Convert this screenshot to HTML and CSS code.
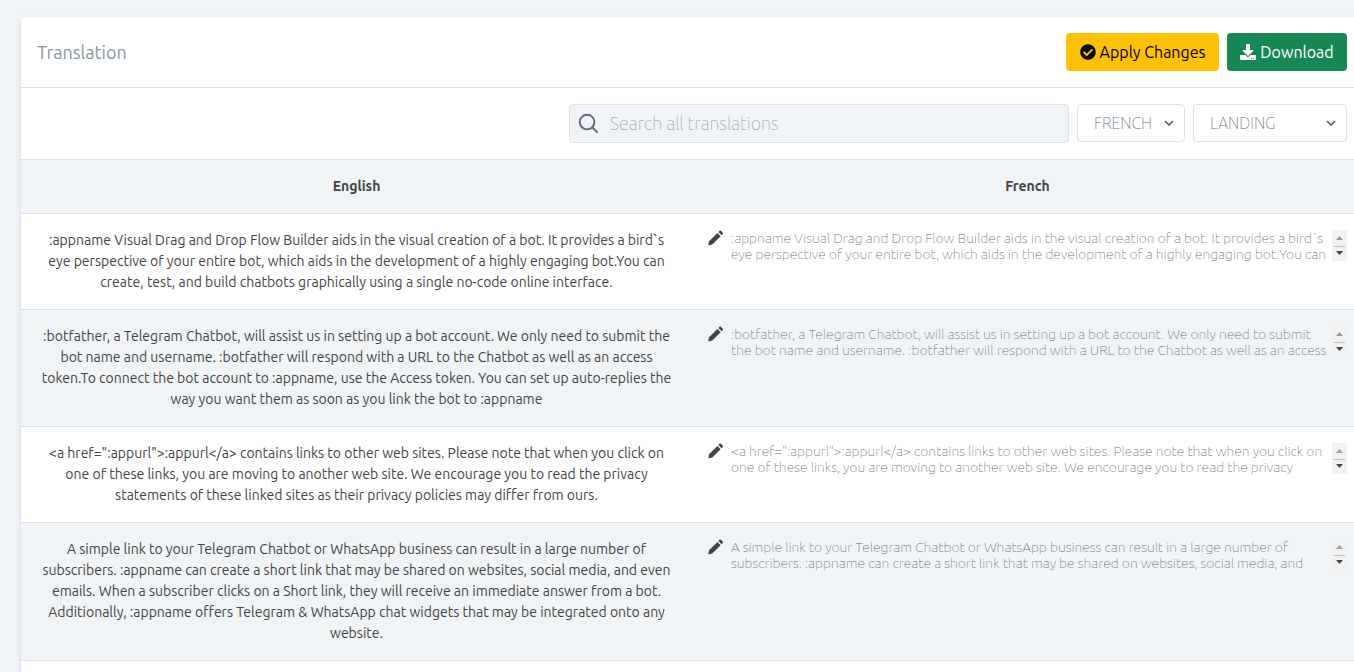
FILE: index.html
```html
<!DOCTYPE html>
<html lang="en">
<head>
<meta charset="utf-8">
<title>Translation</title>
<link rel="stylesheet" href="styles.css">
</head>
<body>
<svg class="sprite" aria-hidden="true">
  <symbol id="pencil" viewBox="0 0 16 16"><path d="M.2 15.4 1 11.3 9.4 2.9 12.7 6.2 4.3 14.6ZM10.4 1.9 11.5.8Q12.2.2 12.9.8L14.8 2.7Q15.4 3.4 14.8 4.1L13.7 5.2Z"/></symbol>
  <symbol id="up" viewBox="0 0 15 15"><path d="M4 10 7.5 6 11 10Z"/></symbol>
  <symbol id="down" viewBox="0 0 15 15"><path d="M4 5H11L7.5 9Z"/></symbol>
</svg>
<main class="card">
  <header class="card-header">
    <h1 class="title">Translation</h1>
    <div class="actions">
      <button class="btn btn-warning" type="button"><svg class="btn-icon" viewBox="0 0 512 512" aria-hidden="true"><path d="M504 256c0 137-111 248-248 248S8 393 8 256 119 8 256 8s248 111 248 248zM227 387l184-184c6-6 6-16 0-22l-22-23c-7-6-17-6-23 0L216 308l-70-70c-6-6-16-6-23 0l-22 23c-6 6-6 16 0 22l104 104c6 6 16 6 22 0z"/></svg>Apply Changes</button>
      <button class="btn btn-success" type="button"><svg class="btn-icon" viewBox="0 0 512 512" aria-hidden="true"><path d="M216 0h80c13 0 24 11 24 24v168h88c18 0 27 21 14 34L270 378c-7 7-20 7-28 0L90 226c-12-13-3-34 15-34h87V24c0-13 11-24 24-24zm296 376v112c0 13-11 24-24 24H24c-13 0-24-11-24-24V376c0-13 11-24 24-24h147l49 49c20 20 52 20 72 0l49-49h147c13 0 24 11 24 24zM388 464a20 20 0 1 0-40 0 20 20 0 0 0 40 0zm64 0a20 20 0 1 0-40 0 20 20 0 0 0 40 0z"/></svg>Download</button>
    </div>
  </header>
  <form class="filters">
    <label class="search">
      <svg class="search-icon" viewBox="0 0 22 22" aria-hidden="true"><circle cx="9.5" cy="9.5" r="7.7"/><path d="M15 15 20.5 20.5"/></svg>
      <input class="search-input" type="search" placeholder="Search all translations" aria-label="Search all translations">
    </label>
    <select class="select select-language" aria-label="Language"><option>FRENCH</option></select>
    <select class="select select-group" aria-label="Group"><option>LANDING</option></select>
  </form>
  <table class="table">
    <thead><tr><th>English</th><th>French</th></tr></thead>
    <tbody>
      <tr>
        <td class="source">:appname Visual Drag and Drop Flow Builder aids in the visual creation of a bot. It provides a bird`s<br>eye perspective of your entire bot, which aids in the development of a highly engaging bot.You can<br>create, test, and build chatbots graphically using a single no-code online interface.</td>
        <td><div class="edit"><svg class="pencil" aria-hidden="true"><use href="#pencil"/></svg><textarea class="value" rows="2" wrap="off" aria-label="French translation 1">:appname Visual Drag and Drop Flow Builder aids in the visual creation of a bot. It provides a bird`s
eye perspective of your entire bot, which aids in the development of a highly engaging bot.You can</textarea><div class="scroller"><button type="button" class="step step-up" aria-label="Scroll up"><svg><use href="#up"/></svg></button><button type="button" class="step step-down" aria-label="Scroll down"><svg><use href="#down"/></svg></button></div></div></td>
      </tr>
      <tr>
        <td class="source">:botfather, a Telegram Chatbot, will assist us in setting up a bot account. We only need to submit the<br>bot name and username. :botfather will respond with a URL to the Chatbot as well as an access<br>token.To connect the bot account to :appname, use the Access token. You can set up auto-replies the<br>way you want them as soon as you link the bot to :appname</td>
        <td><div class="edit"><svg class="pencil" aria-hidden="true"><use href="#pencil"/></svg><textarea class="value" rows="2" wrap="off" aria-label="French translation 2">:botfather, a Telegram Chatbot, will assist us in setting up a bot account. We only need to submit
the bot name and username. :botfather will respond with a URL to the Chatbot as well as an access</textarea><div class="scroller"><button type="button" class="step step-up" aria-label="Scroll up"><svg><use href="#up"/></svg></button><button type="button" class="step step-down" aria-label="Scroll down"><svg><use href="#down"/></svg></button></div></div></td>
      </tr>
      <tr>
        <td class="source">&lt;a href=":appurl"&gt;:appurl&lt;/a&gt; contains links to other web sites. Please note that when you click on<br>one of these links, you are moving to another web site. We encourage you to read the privacy<br>statements of these linked sites as their privacy policies may differ from ours.</td>
        <td><div class="edit"><svg class="pencil" aria-hidden="true"><use href="#pencil"/></svg><textarea class="value" rows="2" wrap="off" aria-label="French translation 3">&lt;a href=":appurl"&gt;:appurl&lt;/a&gt; contains links to other web sites. Please note that when you click on
one of these links, you are moving to another web site. We encourage you to read the privacy</textarea><div class="scroller"><button type="button" class="step step-up" aria-label="Scroll up"><svg><use href="#up"/></svg></button><button type="button" class="step step-down" aria-label="Scroll down"><svg><use href="#down"/></svg></button></div></div></td>
      </tr>
      <tr>
        <td class="source">A simple link to your Telegram Chatbot or WhatsApp business can result in a large number of<br>subscribers. :appname can create a short link that may be shared on websites, social media, and even<br>emails. When a subscriber clicks on a Short link, they will receive an immediate answer from a bot.<br>Additionally, :appname offers Telegram &amp; WhatsApp chat widgets that may be integrated onto any<br>website.</td>
        <td><div class="edit"><svg class="pencil" aria-hidden="true"><use href="#pencil"/></svg><textarea class="value" rows="2" wrap="off" aria-label="French translation 4">A simple link to your Telegram Chatbot or WhatsApp business can result in a large number of
subscribers. :appname can create a short link that may be shared on websites, social media, and</textarea><div class="scroller"><button type="button" class="step step-up" aria-label="Scroll up"><svg><use href="#up"/></svg></button><button type="button" class="step step-down" aria-label="Scroll down"><svg><use href="#down"/></svg></button></div></div></td>
      </tr>
    </tbody>
  </table>
</main>
</body>
</html>
```

FILE: styles.css
```css
* { box-sizing: border-box; }
body {
  margin: 0;
  height: 100vh;
  padding: 17px 0 0 21px;
  overflow: hidden;
  background: #f0f4f7;
  color: #444;
  font-family: Ubuntu, "Noto Sans", sans-serif;
  font-size: 14px;
  font-weight: 400;
}
button, input, select, textarea { font: inherit; }
.sprite { position: absolute; width: 0; height: 0; }
.card {
  min-height: 100vh;
  margin-right: -9px;
  background: #fff;
  border-radius: 4px;
  box-shadow: 0 2px 5px rgba(50, 70, 90, .16);
}
.card-header {
  display: flex;
  align-items: center;
  justify-content: space-between;
  padding: 16px;
  border-bottom: 1px solid #d9dfe3;
}
.title { margin: 0; color: #8795a1; font-size: 18px; font-weight: 400; }
.actions, .filters { display: flex; gap: 8px; }
.btn {
  display: flex;
  align-items: center;
  justify-content: center;
  gap: 4px;
  height: 38px;
  border: 0;
  border-radius: 4px;
  font-size: 16px;
  white-space: nowrap;
}
.btn-icon { width: 16px; height: 16px; fill: currentColor; }
.btn-warning { width: 153px; background: #ffc107; color: #000; }
.btn-success { width: 120px; background: #198754; color: #fff; }
.filters { justify-content: flex-end; padding: 16px; }
.search {
  display: flex;
  align-items: center;
  gap: 11px;
  width: 500px;
  height: 39px;
  padding-left: 8px;
  background: #f0f4f7;
  border: 1px solid #d9e2ec;
  border-radius: 4px;
}
.search-icon { width: 21px; height: 21px; fill: none; stroke: #596a7e; stroke-width: 2; }
.search-input { flex: 1; min-width: 0; height: 36px; padding: 0 0 2px; border: 0; outline: 0; background: none; font-size: 18px; font-weight: 100; }
.search-input::placeholder { color: #95a2ad; }
.select {
  height: 38px;
  padding: 0 16px;
  appearance: none;
  border: 1px solid #d9e2ec;
  border-radius: 4px;
  background: #fff url("data:image/svg+xml,%3Csvg xmlns='http://www.w3.org/2000/svg' viewBox='0 0 10 6'%3E%3Cpath d='M1 1 5 5 9 1' fill='none' stroke='%23526173' stroke-width='1.7'/%3E%3C/svg%3E") no-repeat right 10px center / 10px 6px;
  color: #606f7b;
  font-size: 16px;
  font-weight: 100;
}
.select-language { width: 108px; }
.select-group { width: 154px; }
.table { width: 100%; border-collapse: separate; border-spacing: 0; table-layout: fixed; }
.table th, .table td { border-bottom: 1px solid #d9e2ec; padding: 16px; line-height: 21px; vertical-align: top; }
.table th { border-top: 1px solid #d9e2ec; background: #f0f4f7; font-weight: 700; }
.table tbody tr:nth-child(even) { background: #f0f4f7; }
.table .source { text-align: center; white-space: nowrap; }
.edit { display: flex; align-items: flex-start; }
.pencil { width: 16px; height: 16px; margin-right: 7px; fill: #444; flex: none; }
.value {
  flex: 1;
  min-width: 0;
  height: 32px;
  padding: 0;
  border: 0;
  outline: 0;
  resize: none;
  overflow: hidden;
  background: none;
  color: #606f7b;
  font-size: 14px;
  font-weight: 100;
  line-height: 16px;
}
.scroller { display: flex; flex-direction: column; flex: none; width: 15px; height: 31px; background: #f1f1f1; }
.step { display: block; flex: 1; width: 15px; padding: 0; border: 0; background: none; fill: #9a9a9a; }
.step svg { display: block; width: 15px; height: 15px; }
.step-down { background: linear-gradient(#bdbdbd, #bdbdbd) no-repeat center top / 11px 1px; fill: #444; }
```
